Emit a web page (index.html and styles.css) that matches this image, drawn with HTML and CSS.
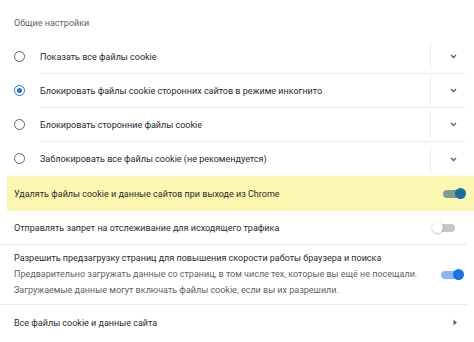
FILE: index.html
```html
<!DOCTYPE html>
<html lang="ru">
<head>
<meta charset="utf-8">
<link rel="stylesheet" href="styles.css">
</head>
<body>
<div class="page">
  <div class="section-title">Общие настройки</div>

  <div class="radio-list">
    <div class="radio-row">
      <span class="radio"></span>
      <div class="radio-body">
        <span class="label">Показать все файлы cookie</span>
        <span class="vsep"></span>
        <svg class="chev" width="7" height="5" viewBox="0 0 7 5"><path d="M1 1 L3.5 3.5 L6 1" fill="none" stroke="#5f6368" stroke-width="1.4"/></svg>
      </div>
    </div>
    <div class="radio-row">
      <span class="radio checked"></span>
      <div class="radio-body">
        <span class="label">Блокировать файлы cookie сторонних сайтов в режиме инкогнито</span>
        <span class="vsep"></span>
        <svg class="chev" width="7" height="5" viewBox="0 0 7 5"><path d="M1 1 L3.5 3.5 L6 1" fill="none" stroke="#5f6368" stroke-width="1.4"/></svg>
      </div>
    </div>
    <div class="radio-row">
      <span class="radio"></span>
      <div class="radio-body">
        <span class="label">Блокировать сторонние файлы cookie</span>
        <span class="vsep"></span>
        <svg class="chev" width="7" height="5" viewBox="0 0 7 5"><path d="M1 1 L3.5 3.5 L6 1" fill="none" stroke="#5f6368" stroke-width="1.4"/></svg>
      </div>
    </div>
    <div class="radio-row last">
      <span class="radio"></span>
      <div class="radio-body">
        <span class="label">Заблокировать все файлы cookie (не рекомендуется)</span>
        <span class="vsep"></span>
        <svg class="chev" width="7" height="5" viewBox="0 0 7 5"><path d="M1 1 L3.5 3.5 L6 1" fill="none" stroke="#5f6368" stroke-width="1.4"/></svg>
      </div>
    </div>
  </div>

  <div class="toggle-row highlight">
    <span class="label">Удалять файлы cookie и данные сайтов при выходе из Chrome</span>
    <span class="toggle on"><span class="knob"></span></span>
  </div>

  <div class="toggle-row plain bordered">
    <span class="label">Отправлять запрет на отслеживание для исходящего трафика</span>
    <span class="toggle"><span class="knob"></span></span>
  </div>

  <div class="toggle-row multi bordered">
    <div class="texts">
      <div class="label">Разрешить предзагрузку страниц для повышения скорости работы браузера и поиска</div>
      <div class="sub">Предварительно загружать данные со страниц, в том числе тех, которые вы ещё не посещали.</div>
      <div class="sub">Загружаемые данные могут включать файлы cookie, если вы их разрешили.</div>
    </div>
    <span class="toggle on"><span class="knob"></span></span>
  </div>

  <div class="link-row">
    <span class="label">Все файлы cookie и данные сайта</span>
    <svg class="arrow" width="5" height="7" viewBox="0 0 5 7"><path d="M0.5 0.5 L4 3.5 L0.5 6.5 Z" fill="#5f6368"/></svg>
  </div>
</div>
</body>
</html>
```

FILE: styles.css
```css
html, body {
  margin: 0;
  padding: 0;
  background: #ffffff;
}

body {
  font-family: Roboto, "Noto Sans", "Liberation Sans", sans-serif;
  font-size: 9px;
  color: #2a2b2e;
  width: 474px;
  height: 342px;
  overflow: hidden;
}

.page {
  display: flex;
  flex-direction: column;
}

.section-title {
  height: 40px;
  box-sizing: border-box;
  padding: 16px 0 0 14px;
  line-height: 14px;
  color: #5f6368;
  font-size: 9px;
}

.radio-list {
  display: flex;
  flex-direction: column;
}

.radio-row {
  display: flex;
  align-items: stretch;
  height: 34px;
}

.radio {
  flex: none;
  width: 11px;
  height: 11px;
  box-sizing: border-box;
  border: 1.6px solid #5f6368;
  border-radius: 50%;
  margin: 0 15px 0 14px;
  align-self: center;
  margin-top: -1px;
  position: relative;
}

.radio.checked {
  border-color: #1a73e8;
}

.radio.checked::after {
  content: "";
  position: absolute;
  left: 50%;
  top: 50%;
  width: 5px;
  height: 5px;
  margin: -2.5px 0 0 -2.5px;
  border-radius: 50%;
  background: #1a73e8;
}

.radio-body {
  flex: none;
  width: 425px;
  display: flex;
  align-items: center;
  border-bottom: 1px solid #ebebeb;
  box-sizing: border-box;
}

.radio-row.last .radio-body {
  border-bottom: none;
}

.radio-body .label {
  flex: 1;
  line-height: 14px;
}

.vsep {
  flex: none;
  width: 1px;
  height: 27px;
  background: #ececec;
}

.chev {
  flex: none;
  margin: 0 8px 0 19px;
  display: block;
}

.toggle-row {
  display: flex;
  align-items: center;
  box-sizing: border-box;
}

.toggle-row.highlight {
  height: 35px;
  margin-left: 7px;
  padding: 0 11px 0 7px;
  background: #fcf7b0;
}

.toggle-row.plain {
  height: 34px;
  padding: 0 13px 0 14px;
}

.toggle-row.bordered {
  border-bottom: 1px solid #ebebeb;
  width: 468px;
}

.toggle-row.multi {
  height: 60px;
  padding: 0 7px 0 14px;
}

.toggle-row .label {
  flex: 1;
  line-height: 14px;
}

.texts {
  flex: 1;
  display: flex;
  flex-direction: column;
  margin-top: -2px;
}

.texts .label {
  line-height: 16px;
}

.texts .sub {
  line-height: 16px;
  color: #5f6368;
}

.toggle {
  flex: none;
  position: relative;
  width: 20px;
  height: 8px;
  border-radius: 4px;
  background: #c4c6c9;
}

.toggle .knob {
  position: absolute;
  top: -1.5px;
  left: -3px;
  width: 11px;
  height: 11px;
  border-radius: 50%;
  background: #ffffff;
  box-shadow: 0 0.5px 2px rgba(0, 0, 0, 0.35);
}

.toggle.on {
  background: #8ab4f8;
}

.toggle.on .knob {
  left: 12px;
  background: #1a73e8;
  box-shadow: none;
}

.highlight .toggle.on {
  background: #7c9f8e;
}

.highlight .toggle.on .knob {
  background: #196ca8;
}

.link-row {
  display: flex;
  align-items: center;
  height: 35px;
  padding: 0 16px 0 14px;
}

.link-row .label {
  flex: 1;
  line-height: 14px;
}

.arrow {
  display: block;
  flex: none;
}
```
